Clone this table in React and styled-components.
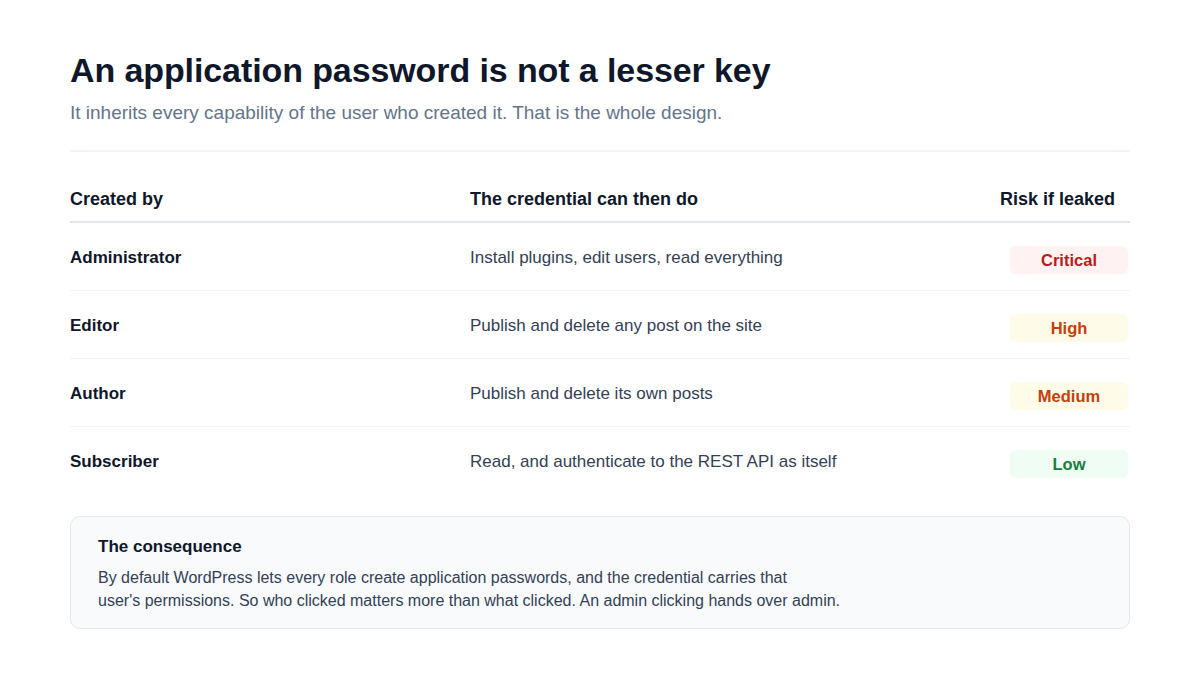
import React from "react";
import styled, { createGlobalStyle } from "styled-components";

const GlobalStyle = createGlobalStyle`
  html, body {
    margin: 0;
    padding: 0;
    background: #ffffff;
  }
  body {
    font-family: "Liberation Sans", Arial, sans-serif;
    color: #0f172a;
  }
`;

const Page = styled.div`
  width: 1200px;
  height: 675px;
  box-sizing: border-box;
  padding: 49px 70px 0 70px;
`;

const Title = styled.h1`
  margin: 0;
  font-size: 34px;
  line-height: 42px;
  font-weight: 700;
  color: #0f172a;
  letter-spacing: -0.1px;
`;

const Subtitle = styled.p`
  margin: 9px 0 0 0;
  font-size: 19px;
  line-height: 26px;
  color: #64748b;
`;

const Divider = styled.hr`
  border: none;
  height: 2px;
  background: #f1f5f9;
  margin: 24px 0 0 0;
`;

const Table = styled.div`
  margin-top: 35px;
  display: flex;
  flex-direction: column;
`;

const Row = styled.div`
  display: grid;
  grid-template-columns: 400px 530px 130px;
  border-bottom: ${(p) => (p.$head ? "2px solid #e2e8f0" : p.$last ? "none" : "1px solid #f1f5f9")};
`;

const HeadCell = styled.div`
  padding: 0 0 10px 0;
  font-size: 18px;
  line-height: 24px;
  font-weight: 700;
  color: #0f172a;
`;

const Cell = styled.div`
  padding: 23px 0 16px 0;
  font-size: 17px;
  line-height: 24px;
  font-weight: ${(p) => (p.$bold ? 700 : 400)};
  color: ${(p) => (p.$bold ? "#0f172a" : "#334155")};
  display: flex;
  align-items: flex-start;
`;

const BadgeCell = styled.div`
  padding: 23px 2px 16px 10px;
  display: flex;
  align-items: flex-start;
`;

const tones = {
  critical: { bg: "#fef2f2", fg: "#b91c1c" },
  high: { bg: "#fefbe8", fg: "#c2410c" },
  medium: { bg: "#fefbe8", fg: "#c2410c" },
  low: { bg: "#f0fdf4", fg: "#15803d" },
};

const Badge = styled.span`
  display: flex;
  align-items: center;
  justify-content: center;
  width: 100%;
  height: 28px;
  border-radius: 6px;
  font-size: 16.5px;
  font-weight: 700;
  background: ${(p) => tones[p.$tone].bg};
  color: ${(p) => tones[p.$tone].fg};
`;

const Callout = styled.div`
  margin-top: 22px;
  background: #f8fafc;
  border: 1px solid #e2e8f0;
  border-radius: 10px;
  padding: 19px 27px 16px 27px;
`;

const CalloutTitle = styled.h3`
  margin: 0;
  font-size: 17px;
  line-height: 22px;
  font-weight: 700;
  color: #0f172a;
`;

const CalloutText = styled.p`
  margin: 8px 0 0 0;
  font-size: 16px;
  line-height: 23px;
  color: #334155;
`;

const rows = [
  { role: "Administrator", can: "Install plugins, edit users, read everything", risk: "Critical", tone: "critical" },
  { role: "Editor", can: "Publish and delete any post on the site", risk: "High", tone: "high" },
  { role: "Author", can: "Publish and delete its own posts", risk: "Medium", tone: "medium" },
  { role: "Subscriber", can: "Read, and authenticate to the REST API as itself", risk: "Low", tone: "low" },
];

export default function App() {
  return (
    <Page>
      <GlobalStyle />
      <Title>An application password is not a lesser key</Title>
      <Subtitle>It inherits every capability of the user who created it. That is the whole design.</Subtitle>
      <Divider />
      <Table>
        <Row $head>
          <HeadCell>Created by</HeadCell>
          <HeadCell>The credential can then do</HeadCell>
          <HeadCell>Risk if leaked</HeadCell>
        </Row>
        {rows.map((r, i) => (
          <Row key={r.role} $last={i === rows.length - 1}>
            <Cell $bold>{r.role}</Cell>
            <Cell>{r.can}</Cell>
            <BadgeCell>
              <Badge $tone={r.tone}>{r.risk}</Badge>
            </BadgeCell>
          </Row>
        ))}
      </Table>
      <Callout>
        <CalloutTitle>The consequence</CalloutTitle>
        <CalloutText>
          By default WordPress lets every role create application passwords, and the credential carries that
          <br />
          user's permissions. So who clicked matters more than what clicked. An admin clicking hands over admin.
        </CalloutText>
      </Callout>
    </Page>
  );
}
